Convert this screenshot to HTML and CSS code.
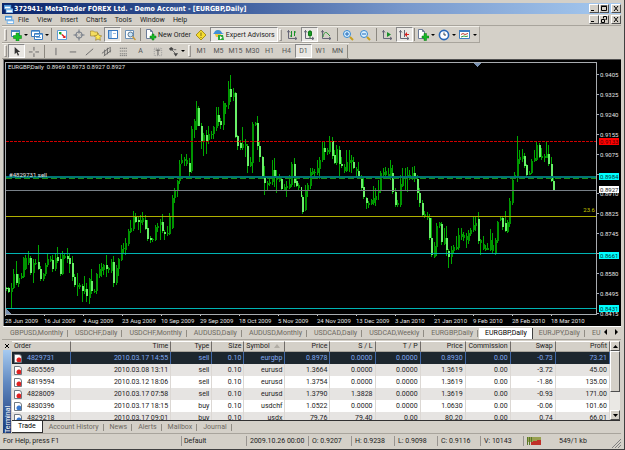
FILE: index.html
```html
<!DOCTYPE html>
<html lang="en">
<head>
<meta charset="utf-8">
<title>372941: MetaTrader FOREX Ltd. - Demo Account - [EURGBP,Daily]</title>
<link rel="stylesheet" href="styles.css">
</head>
<body>
<svg class="defs" aria-hidden="true">
  <symbol id="app" viewBox="0 0 10 10"><path fill="#4a94d8" d="M0 1h8v5H0z"/><path fill="#fff" d="M1 3h6v2H1z"/><path fill="#78b4e8" d="M2 5h8v5H2z"/><path fill="#fff" d="M3 7h6v2H3z"/></symbol>
  <symbol id="doc" viewBox="0 0 10 10"><path fill="#fff" stroke="#6c7c98" d="M1.500.5h4l2 2v7h-6z"/><path fill="none" stroke="#6c7c98" d="M5.500.5v2h2"/></symbol>
  <symbol id="axes" viewBox="0 0 10 10"><path fill="none" stroke="#667" d="M1.500 0v8.500H10M0 2.500l1.500-2 1.500 2M8 7l2 1.500L8 10"/></symbol>
</svg>
<div class="window">
  <header class="titlebar">
    <svg class="logo"><use href="#app"/></svg>
    <h1>372941: MetaTrader FOREX Ltd. - Demo Account - [EURGBP,Daily]</h1>
    <div class="winbtns">
      <button aria-label="Minimize"><svg viewBox="0 0 8 7"><path d="M1 5h3v1H1z"/></svg></button>
      <button aria-label="Maximize"><svg viewBox="0 0 8 7"><path fill="none" stroke="#000" d="M1.500 1.500h5v4h-5zM1 1h6"/></svg></button>
      <button class="close" aria-label="Close"><svg viewBox="0 0 8 7"><path stroke="#000" d="M2 1l4 5M6 1L2 6"/></svg></button>
    </div>
  </header>
  <nav class="menubar">
    <svg class="logo"><use href="#app"/></svg>
    <button>File</button><button>View</button><button>Insert</button><button>Charts</button><button>Tools</button><button>Window</button><button>Help</button>
    <div class="winbtns">
      <button aria-label="Minimize chart"><svg viewBox="0 0 8 7"><path d="M1 5h3v1H1z"/></svg></button>
      <button aria-label="Restore chart"><svg viewBox="0 0 8 7"><path fill="none" stroke="#000" d="M3.500 2.500v-2h3v3h-1M1.500 3.500h3v3h-3z"/></svg></button>
      <button class="close" aria-label="Close chart"><svg viewBox="0 0 8 7"><path stroke="#000" d="M2 1l4 5M6 1L2 6"/></svg></button>
    </div>
  </nav>

  <div class="toolbars">
    <div class="bar">
      <i class="grip"></i>
      <button class="drop" aria-label="New chart"><svg viewBox="0 0 12 12"><path fill="#fff" stroke="#4a84c0" d="M1.500 1.500h8v6h-8z"/><path fill="#4a84c0" d="M1 1h9v2H1z"/><path fill="#18c028" stroke="#087810" stroke-width=".5" d="M6 4h3v2.500h2.500v3H9V12H6V9.500H3.500v-3H6z"/></svg></button>
      <button class="drop" aria-label="Profiles"><svg viewBox="0 0 12 12"><path fill="#fff" stroke="#3c7cc0" d="M.5 1.500h8v6h-8zM3.500 4.500h8v6h-8z"/><path fill="#78b0e0" d="M4 5h7v1H4zM5 8h5v1H5zM1 2h7v1H1z"/></svg></button>
      <i class="sep"></i>
      <button aria-label="Market watch"><svg viewBox="0 0 12 12"><path fill="#fff" stroke="#5a9ad4" d="M1.500 1.500h9v9h-9z"/><path fill="#18a828" d="M3 5.500V3h3z"/><path stroke="#18a828" stroke-width="1.500" d="M3.500 3.500l2 2"/><path fill="#e02020" d="M9.500 6.500V9H6.500z"/><path stroke="#e02020" stroke-width="1.500" d="M6 5.500l3 3"/></svg></button>
      <button aria-label="Data window"><svg viewBox="0 0 12 12"><circle cx="6" cy="6" r="3.200" fill="none" stroke="#707884"/><path stroke="#707884" d="M6 .5v4M6 7.500v4M.5 6h4M7.500 6h4"/></svg></button>
      <button aria-label="Navigator"><svg viewBox="0 0 12 12"><path fill="#f4dc60" stroke="#a08838" stroke-width=".7" d="M.5 3.500V2h3l1 1h3v4h-7z"/><path fill="#ffe850" stroke="#988030" stroke-width=".7" d="M8 4l1.200 2.500 2.500.3-1.800 1.900.5 2.600L8 10l-2.400 1.300.5-2.600-1.800-1.900 2.500-.3z"/></svg></button>
      <button class="on" aria-label="Terminal"><svg viewBox="0 0 12 12"><path fill="#fff" stroke="#3878c0" d="M1.500 1.500h9v8h-9z"/><path fill="#3878c0" d="M1 1h10v1H1zM3 4h1v1H3zM3 6h1v1H3zM6 4h3v.6H6z"/><path fill="#9cc4ec" d="M2 2h3v7H2z"/></svg></button>
      <button aria-label="Strategy tester"><svg viewBox="0 0 12 12"><path fill="#fff" stroke="#6890b8" d="M1.500 1.500h8v8h-8z"/><circle cx="6.500" cy="5.500" r="2.500" fill="#c8e4f8" stroke="#607890"/><path stroke="#c89838" stroke-width="1.500" d="M8.500 7.500l3 3.500"/></svg></button>
      <i class="sep wide"></i>
      <button class="labelled"><svg viewBox="0 0 12 12"><use href="#doc" width="10" height="10"/><path fill="#18b828" stroke="#087810" stroke-width=".5" d="M7 5h2v2h2v2H9v2H7V9H5V7h2z"/></svg>New Order</button>
      <button aria-label="MetaEditor"><svg viewBox="0 0 12 12"><path fill="#f4dc30" stroke="#a89020" d="M6 1l5 5-5 5-5-5z"/><path fill="none" stroke="#806c10" d="M6 3.500v3.500M6 8v1"/></svg></button>
      <button class="labelled on"><svg viewBox="0 0 12 12"><circle cx="5" cy="4" r="3" fill="#f0c840"/><path fill="#4090d8" d="M1 4c1-4 7-4 8 0l2 1H0z"/><path fill="#f0c840" d="M2 5h6l-2 3H3z"/><path fill="#28a838" d="M5 6h5l1 5H5z"/><path fill="#fff" d="M7 7l2.500 1.700L7 10.500z"/></svg>Expert Advisors</button>
      <i class="grip"></i>
      <button aria-label="Bar chart"><svg viewBox="0 0 12 12"><use href="#axes" x="1" y="1" width="10" height="10"/><path fill="none" stroke="#189028" d="M5.500 2v6M4 7h1.500M8.500 2v5M8.500 3H10"/></svg></button>
      <button class="on" aria-label="Candlesticks"><svg viewBox="0 0 12 12"><use href="#axes" x="1" y="1" width="10" height="10"/><path fill="#20c030" stroke="#107818" d="M5.500 2.500h3v4h-3zM7 1v8"/></svg></button>
      <button aria-label="Line chart"><svg viewBox="0 0 12 12"><use href="#axes" x="1" y="1" width="10" height="10"/><path fill="none" stroke="#309838" d="M3 8c1-6 4-5 5-3l2 2"/></svg></button>
      <i class="sep wide"></i>
      <button aria-label="Zoom in"><svg viewBox="0 0 12 12"><path stroke="#c8a020" stroke-width="2" d="M8 8l3 3"/><circle cx="5" cy="5" r="3.500" fill="#d8f0ff" stroke="#3888d0"/><path stroke="#2068b8" d="M3 5h4M5 3v4"/></svg></button>
      <button aria-label="Zoom out"><svg viewBox="0 0 12 12"><path stroke="#c8a020" stroke-width="2" d="M8 8l3 3"/><circle cx="5" cy="5" r="3.500" fill="#d8f0ff" stroke="#3888d0"/><path stroke="#2068b8" d="M3 5h4"/></svg></button>
      <i class="sep wide"></i>
      <button aria-label="Auto scroll"><svg viewBox="0 0 12 12"><use href="#axes" x="1" y="1" width="10" height="10"/><path fill="#189028" d="M6 3l4 2.500L6 8z"/></svg></button>
      <button class="on" aria-label="Chart shift"><svg viewBox="0 0 12 12"><use href="#axes" x="1" y="1" width="10" height="10"/><path fill="none" stroke="#667" d="M6.500 1v7"/><path fill="#d82020" d="M11 5H9V3L6.500 5.500 9 8V6h2z"/></svg></button>
      <i class="sep"></i>
      <button class="drop" aria-label="Indicators"><svg viewBox="0 0 12 12"><use href="#doc" width="10" height="10"/><path fill="#18b828" stroke="#087810" stroke-width=".5" d="M7 4.500h2.500V7H12v2H9.500v2.500H7V9H5V7h2z"/></svg></button>
      <button class="drop" aria-label="Periods"><svg viewBox="0 0 12 12"><circle cx="6" cy="6" r="4.600" fill="#fff" stroke="#2868b8" stroke-width="1.600"/><path fill="none" stroke="#345" d="M6 3.500V6h2"/></svg></button>
      <button class="drop" aria-label="Templates"><svg viewBox="0 0 12 12"><path fill="#fff" stroke="#3c7cc0" d="M.5 1.500h10v8H.5z"/><path fill="#3c7cc0" d="M0 1h11v2H0z"/><path fill="none" stroke="#c04030" d="M2 5.500l2-1 2 1 3-1"/><path fill="none" stroke="#30a040" d="M2 8l3-1 2 .5 2-.5"/></svg></button>
    </div>
    <div class="bar fine">
      <i class="grip"></i>
      <button class="on" aria-label="Cursor"><svg viewBox="0 0 12 12"><path fill="#333" d="M4 1v8l2-2 1.500 3.500 1.300-.6L7.300 6.500H10z"/></svg></button>
      <button aria-label="Crosshair"><svg viewBox="0 0 12 12"><path stroke="#666" d="M6.500 1v4M6.500 8v4M1 6.500h4M8 6.500h4"/></svg></button>
      <i class="sep wide"></i>
      <button aria-label="Vertical line"><svg viewBox="0 0 12 12"><path stroke="#666" d="M6.500 2v8"/></svg></button>
      <button aria-label="Horizontal line"><svg viewBox="0 0 12 12"><path stroke="#666" d="M3 6.500h7"/></svg></button>
      <button aria-label="Trendline"><svg viewBox="0 0 12 12"><path stroke="#666" d="M2 10l8-7"/></svg></button>
      <button aria-label="Channel"><svg viewBox="0 0 12 12"><path stroke="#666" d="M1 8l8-6M3 11l8-6M4 4v6M7 2v7M10 1v6"/></svg></button>
      <button aria-label="Fibonacci"><svg viewBox="0 0 12 12"><path stroke="#777" stroke-dasharray="1.500 .6" d="M2 2.500h8M2 5.500h8M2 8.500h8M2 10.500h8"/></svg></button>
      <button>A</button>
      <button aria-label="Text label"><svg viewBox="0 0 12 12"><path fill="none" stroke="#999" stroke-dasharray="1 1" d="M2.500 2.500h8v8h-8z"/><path fill="none" stroke="#555" d="M4 4.500h5M6.500 4v6"/></svg></button>
      <button class="drop" aria-label="Arrows"><svg viewBox="0 0 12 12"><path fill="#444" d="M1 3l2.500-2L6 3 4.500 5h-2zM6 8h5l-2.500 3.500z"/><path stroke="#666" d="M4 4l5 5M6 4h3"/></svg></button>
      <i class="grip"></i>
      <button>M1</button><button>M5</button><button>M15</button><button>M30</button><button>H1</button><button>H4</button><button class="on">D1</button><button>W1</button><button>MN</button>
      <i class="sep"></i>
    </div>
  </div>

  <main class="chart">
    <div class="plot">
      <svg class="candles" viewBox="18 6 1773 759" preserveAspectRatio="none" role="img" aria-label="EURGBP daily candlesticks">
        <g id="bars"></g>
        <g class="levels">
          <path class="stop" d="M18 242H1791"/>
          <path class="entry" d="M18 351H1791"/>
          <path class="order" d="M18 355.500H1791"/>
          <path class="bid" d="M18 391.500H1791"/>
          <path class="fib" d="M18 469.500H1791"/>
          <path class="cyan" d="M18 583.500H1791M18 748.500H1791"/>
        </g>
        <path class="mark" d="M1422 6h24l-12 12zM18 747l18 18H18z"/>
      </svg>
      <span class="caption">EURGBP,Daily&nbsp; 0.8969 0.8973 0.8927 0.8927</span>
      <span class="trade">#4829731 sell</span>
      <span class="ratio">23.6</span>
    </div>
    <div class="prices">
      <ol><li>0.9405</li><li>0.9325</li><li>0.9240</li><li>0.9155</li><li>0.9075</li><li></li><li>0.8910</li><li>0.8825</li><li>0.8745</li><li></li><li>0.8580</li><li>0.8495</li><li>0.8415</li></ol>
      <b class="tag red">0.9133</b><b class="tag sell">0.8984</b><b class="tag now">0.8927</b><b class="tag low">0.8661</b><b class="tag base">0.8431</b>
    </div>
    <ol class="dates"><li>28 Jun 2009</li><li>16 Jul 2009</li><li>4 Aug 2009</li><li>23 Aug 2009</li><li>10 Sep 2009</li><li>29 Sep 2009</li><li>18 Oct 2009</li><li>5 Nov 2009</li><li>24 Nov 2009</li><li>13 Dec 2009</li><li>3 Jan 2010</li><li>21 Jan 2010</li><li>9 Feb 2010</li><li>28 Feb 2010</li><li>18 Mar 2010</li></ol>
  </main>

  <nav class="charttabs">
    <div class="strip"><button>GBPUSD,Monthly</button><button>USDCHF,Daily</button><button>USDCHF,Monthly</button><button>AUDUSD,Daily</button><button>AUDUSD,Monthly</button><button>USDCAD,Daily</button><button>USDCAD,Weekly</button><button>EURGBP,Daily</button><button class="active">EURGBP,Daily</button><button>EURJPY,Daily</button><button class="last">EU</button></div>
    <button class="nav" aria-label="Previous"><svg viewBox="0 0 4 6"><path d="M3 0v6L0 3z"/></svg></button>
    <button class="nav" aria-label="Next"><svg viewBox="0 0 4 6"><path d="M1 0v6l3-3z"/></svg></button>
  </nav>

  <section class="terminal">
    <aside><button aria-label="Close terminal"><svg viewBox="0 0 6 6"><path stroke="#000" d="M1 1l4 4M5 1L1 5"/></svg></button><div class="side"><span>Terminal</span></div></aside>
    <div class="panel">
      <div class="list">
        <div class="rows">
        <table>
          <colgroup><col class="c59"><col class="c100"><col class="c41"><col class="c32"><col class="c41"><col class="c45"><col class="c45"><col class="c45"><col class="c45"><col class="c45"><col class="c45"><col class="c54"></colgroup>
          <thead><tr><th class="l">Order</th><th>Time</th><th>Type</th><th>Size</th><th class="l">Symbol <span class="sort"></span></th><th>Price</th><th>S / L</th><th>T / P</th><th>Price</th><th>Commission</th><th>Swap</th><th>Profit</th></tr></thead>
          <tbody>
            <tr class="sel"><td class="l"><i class="dot"></i>4829731</td><td>2010.03.17 14:55</td><td>sell</td><td>0.10</td><td>eurgbp</td><td>0.8978</td><td>0.0000</td><td>0.0000</td><td>0.8930</td><td>0.00</td><td>-0.73</td><td>73.21</td></tr>
            <tr><td class="l"><i class="dot"></i>4805569</td><td>2010.03.08 13:11</td><td>sell</td><td>0.10</td><td>eurusd</td><td>1.3664</td><td>0.0000</td><td>0.0000</td><td>1.3619</td><td>0.00</td><td>-3.72</td><td>45.00</td></tr>
            <tr><td class="l"><i class="dot"></i>4819594</td><td>2010.03.12 18:06</td><td>sell</td><td>0.10</td><td>eurusd</td><td>1.3754</td><td>0.0000</td><td>0.0000</td><td>1.3619</td><td>0.00</td><td>-1.86</td><td>135.00</td></tr>
            <tr><td class="l"><i class="dot"></i>4828009</td><td>2010.03.17 07:58</td><td>sell</td><td>0.10</td><td>eurusd</td><td>1.3790</td><td>1.3828</td><td>0.0000</td><td>1.3619</td><td>0.00</td><td>-0.93</td><td>171.00</td></tr>
            <tr><td class="l"><i class="dot buy"></i>4830396</td><td>2010.03.17 18:15</td><td>buy</td><td>0.10</td><td>usdchf</td><td>1.0522</td><td>0.0000</td><td>0.0000</td><td>1.0630</td><td>0.00</td><td>-0.06</td><td>101.60</td></tr>
            <tr><td class="l"><i class="dot buy"></i>4829218</td><td>2010.03.17 09:01</td><td>buy</td><td>0.10</td><td>usdx</td><td>79.76</td><td>79.40</td><td>0.00</td><td>80.20</td><td>0.00</td><td>0.74</td><td>66.01</td></tr>
          </tbody>
        </table>
        </div>
        <div class="scroll"><button aria-label="Scroll up"><svg viewBox="0 0 5 3"><path d="M0 3h5L2.500 0z"/></svg></button><div class="thumb"></div><button aria-label="Scroll down"><svg viewBox="0 0 5 3"><path d="M0 0h5L2.500 3z"/></svg></button></div>
      </div>
      <nav class="tabs"><button class="active">Trade</button><button>Account History</button><button>News</button><button>Alerts</button><button>Mailbox</button><button>Journal</button></nav>
    </div>
  </section>

  <footer class="status">
    <span class="help">For Help, press F1</span><span class="profile">Default</span><span class="when">2009.10.26 00:00</span><span>O: 0.9207</span><span>H: 0.9238</span><span>L: 0.9098</span><span>C: 0.9116</span><span>V: 10143</span>
    <span class="net"><svg viewBox="0 0 15 8"><path fill="#98a050" d="M0 0h14v5H0z"/><path fill="#587828" d="M0 0h1v8H0zM2 0h1v8H2zM4 0h1v5H4z"/><path fill="#c03028" d="M4 5h2V4h4V3h4v5H4z"/></svg>549/1 kb</span>
    <svg class="resize" viewBox="0 0 10 10"><path stroke="#808080" d="M1 10l9-9M4 10l6-6M7 10l3-3"/></svg>
  </footer>
</div>
<script src="chart.js"></script>
</body>
</html>
```
FILE: chart.js
```js
// One entry per day: wick top, body top, body bottom, wick bottom; "d" marks a falling day.
const days = `684 686 690 694 d,682 687 697 703 d,670 685 697 748,630 645 686 690,605 645 670 678 d,645 655 675 682,640 650 656 660,592 596 652 656,586 596 628 632,575 596 612 618,
590 596 640 646 d,600 612 640 672,600 610 614 618,555 608 628 632 d,620 628 658 664 d,640 644 658 666,612 618 645 650,585 600 618 622,590 600 604 608,586 602 628 638 d,
583 596 628 636,562 594 604 610 d,584 600 644 650 d,575 588 644 648,585 590 596 600,565 590 598 612 d,585 596 615 640 d,590 612 652 665 d,645 652 678 684 d,640 676 682 710,
672 678 682 690,675 680 695 728 d,650 690 698 706,672 690 712 730 d,655 660 716 734,628 664 696 706 d,690 694 698 702,640 645 696 706,615 628 650 656,610 622 634 654,
615 618 632 648,588 618 628 654 d,622 626 632 640,600 608 634 640,590 608 672 684 d,616 625 672 676,596 600 628 650,556 568 602 606,550 564 568 584,535 550 570 588,
508 514 552 558,480 506 518 520,455 468 508 514,460 468 486 490 d,468 482 488 510 d,465 480 490 520,458 476 486 496,465 480 508 512 d,480 506 538 545 d,528 536 542 550 d,
534 538 542 548,496 502 540 544,490 500 506 518,478 488 496 540,462 486 514 520 d,512 516 524 540 d,500 520 524 528,460 470 522 526,405 414 506 508,385 392 414 430,
360 362 394 412,300 312 364 372,280 298 308 312,290 296 302 316,282 300 310 316,294 308 336 350 d,198 206 334 340,175 182 208 232,120 143 195 210,135 143 195 196 d,
188 195 242 265 d,218 225 244 286,210 225 242 282 d,195 220 240 250,212 220 225 236,195 200 222 236,140 162 204 212,140 162 184 198 d,172 182 194 206 d,122 126 194 208,
126 132 138 160,60 84 134 145,42 84 110 124 d,82 96 110 122,95 98 230 234 d,225 228 258 270 d,240 248 264 270 d,200 252 264 270,236 252 258 290,250 256 316 340 d,
290 306 316 320,183 190 308 338,184 188 194 198,165 188 256 268 d,245 256 290 305 d,286 290 350 356 d,318 350 370 404 d,362 368 374 392,358 365 373 378,300 330 366 376,
294 330 354 380 d,330 355 360 400,342 354 362 366,350 356 386 390 d,372 380 390 394,362 378 384 412,345 372 384 388,305 312 376 382,292 312 368 380 d,350 364 378 382 d,
370 376 384 390,352 380 412 416 d,405 412 456 462 d,375 390 452 455,370 374 390 412,325 336 378 386,322 334 342 345,328 336 340 348,298 324 340 346,290 298 328 358,
245 262 298 304,244 262 276 300 d,264 268 274 284,228 242 276 280,230 242 286 296 d,270 284 308 312 d,255 266 308 314,256 268 310 348 d,290 310 318 324 d,312 320 332 340,
270 306 332 336,270 300 308 336,285 300 306 340,290 304 322 326 d,320 326 334 350,305 332 350 356 d,346 350 384 390 d,350 382 412 416 d,410 414 430 446 d,424 428 434 445,
418 420 432 436,378 414 428 436,385 408 420 438,360 392 400 420,334 338 392 400,322 336 345 356,320 332 346 352,325 342 352 358,300 322 352 360,315 340 396 402 d,
385 396 436 440 d,420 430 436 440,345 372 436 442,322 348 378 380,322 348 354 392,320 346 354 395,330 345 356 360,320 340 356 360,318 338 356 366 d,345 358 398 420 d,
385 398 430 440 d,420 428 466 472 d,455 464 472 476,458 470 474 480,464 474 534 540 d,476 534 588 594 d,548 560 594 595,490 498 562 590,486 490 500 504,488 492 548 555 d,
505 536 552 556,500 536 572 590 d,568 574 592 626 d,560 570 594 614,555 562 574 580,530 562 568 572,505 525 566 570,505 522 532 540,516 526 536 544,520 530 540 565,
510 520 545 552,505 512 522 530,470 496 512 518,472 490 500 514,456 478 545 553 d,538 542 550 586,530 554 568 572,555 565 570 574,550 565 570 572,508 542 570 574,
520 555 575 580,535 540 582 586,485 488 545 550,472 475 480 484,470 476 502 510 d,455 490 514 518 d,480 488 516 520,415 424 494 502,358 360 430 434,335 346 352 356,
228 296 350 366,268 290 300 310,265 286 296 304,278 288 316 322 d,310 314 344 350 d,332 338 344 346,296 302 340 342,270 294 302 306,242 254 298 302,248 254 290 294 d,
262 288 294 298,280 286 292 304,245 280 292 294,255 282 312 316 d,290 312 362 366 d,355 362 390 393 d`;

const step = 7.31;
const unit = 3;
const group = document.getElementById("bars");

function rect(x, y, width, height, name) {
  const node = document.createElementNS("http://www.w3.org/2000/svg", "rect");
  Object.entries({ x, y, width, height, class: name }).forEach(([k, v]) => node.setAttribute(k, v));
  group.append(node);
}

days.split(",").forEach((day, i) => {
  const [high, top, bottom, low, fall] = day.trim().split(" ");
  const x = Math.round((18 + i * step) / unit) * unit;
  rect(x, +high, unit, low - high, "wick");
  rect(x, +top, unit * 2, Math.max(bottom - top, unit), fall ? "fall" : "rise");
});
```
FILE: styles.css
```css
* { box-sizing: border-box; }

body {
  margin: 0;
  background: #d4d0c8;
  color: #222;
  font: 7px/10px Roboto, "Liberation Sans", sans-serif;
}

button {
  margin: 0;
  padding: 0;
  border: 0;
  background: none;
  color: inherit;
  font: inherit;
  white-space: nowrap;
}

ol { margin: 0; padding: 0; list-style: none; }
.defs { position: absolute; width: 0; height: 0; }

.window {
  display: flex;
  flex-direction: column;
  height: 100vh;
  padding: 3px 3px 1px 2px;
  border-right: 1px solid #404040;
  border-bottom: 1px solid #404040;
  overflow: hidden;
}

/* Title and menu */
.titlebar, .menubar {
  display: flex;
  flex: none;
  align-items: center;
  height: 11px;
  padding-left: 2px;
}
.titlebar { background: linear-gradient(90deg, #0a246a, #3c5c9c 36%, #7898cc 65%, #a6caf0); color: #fff; }
.titlebar h1 { margin: 0; font: bold 7px/10px "DejaVu Sans Condensed", "DejaVu Sans", sans-serif; white-space: nowrap; }
.logo { flex: none; width: 9px; height: 9px; margin-right: 1px; }
.menubar { gap: 8px; padding-left: 3px; }
.menubar .logo { margin-right: -4px; }
.winbtns { display: flex; margin-left: auto; }
.winbtns button {
  width: 10px;
  height: 9px;
  border: 1px solid;
  border-color: #fff #505050 #505050 #fff;
  background: #d4d0c8;
}
.winbtns svg { display: block; width: 8px; height: 7px; }
.winbtns .close { margin-left: 2px; }

/* Toolbars */
.toolbars { flex: none; border-top: 1px solid #a8a49c; }
.bar {
  display: flex;
  align-items: center;
  width: max-content;
  height: 17px;
  padding-left: 1px;
  border-top: 1px solid #f0eee8;
  border-right: 1px solid #a8a49c;
  border-bottom: 1px solid #a8a49c;
}
.bar.fine { height: 16px; border-right: 0; color: #555; }
.grip { flex: none; width: 3px; height: 12px; margin: 0 2px 0 1px; border: 1px solid; border-color: #f4f2ee #989490 #989490 #f4f2ee; }
.bar .grip:first-child { margin-right: 1px; }
.sep { flex: none; width: 1px; height: 13px; margin: 0 1px; background: #8c8880; }
.sep.wide { margin: 0 2px; }
.bar button {
  display: flex;
  align-items: center;
  justify-content: center;
  width: 17px;
  height: 15px;
}
.bar.fine button { height: 14px; }
.bar svg { flex: none; width: 12px; height: 12px; }
.bar.fine svg { width: 11px; height: 11px; }
.bar .drop { width: 21px; gap: 2px; }
.drop::after { content: ""; border: 2px solid transparent; border-top-color: #000; border-bottom: 0; }
.bar .labelled { width: auto; gap: 1px; padding: 0 2px; color: #222; }
.bar .on { border: 1px solid; border-color: #888 #fff #fff #888; background: #e9e7e3; }

/* Chart */
.chart {
  display: grid;
  flex: 1;
  grid-template-columns: 1fr 24px;
  grid-template-rows: 1fr 11px;
  min-height: 0;
  margin-left: 1px;
  padding: 2px 0 0 1px;
  border-top: 1px solid #505050;
  border-left: 1px solid #808080;
  background: #000;
  color: #e4e4e4;
  font-size: 6px;
  line-height: 8px;
}
.plot { position: relative; min-height: 0; border: 1px solid #a8acb0; }
.candles { display: block; position: absolute; width: 100%; height: 100%; shape-rendering: crispEdges; }
.wick { fill: #00a800; }
.rise { fill: #009400; }
.fall { fill: #68f068; }
.levels path { fill: none; stroke-width: 1px; vector-effect: non-scaling-stroke; }
.levels .stop { stroke: #d00000; stroke-dasharray: 3 1; }
.levels .entry { stroke: #007474; stroke-width: 2px; }
.levels .order { stroke: #189018; stroke-dasharray: 6 3; }
.levels .bid { stroke: #788088; }
.levels .fib { stroke: #b0b000; }
.levels .cyan { stroke: #00b4b4; }
.mark { fill: #7890b0; }
.caption, .trade, .ratio { position: absolute; white-space: nowrap; }
.caption { top: 0; left: 2px; }
.trade { top: 43%; left: 3px; }
.ratio { top: 57%; right: 1px; color: #c8c800; }
.prices { position: relative; }
.prices ol {
  display: flex;
  flex-direction: column;
  justify-content: space-between;
  height: calc(100% + 3px);
  padding-top: 9px;
}
.prices li { height: 8px; }
.prices li::before { content: ""; display: inline-block; width: 2px; height: 1px; margin-right: 1px; background: #a8acb0; vertical-align: 2px; }
.tag { position: absolute; left: 2px; width: 20px; height: 7px; padding-left: 1px; background: #0ff; color: #003838; font-weight: 400; line-height: 7px; }
.tag.red { top: 30%; background: #f00; color: #500000; }
.tag.sell { top: 44%; }
.tag.now { top: 49%; background: #fff; color: #222; }
.tag.low { top: 75%; }
.tag.base { top: 96%; }
.dates { display: grid; grid-column: 1 / -1; grid-template-columns: repeat(15, 39px); justify-content: start; white-space: nowrap; line-height: 9px; }
.dates li::before { content: ""; display: block; width: 1px; height: 1px; background: #c0c0c0; }

/* Chart tabs */
.charttabs { display: flex; flex: none; align-items: center; height: 13px; margin-left: 1px; padding-left: 1px; border-top: 1px solid #fff; color: #6c6860; }
.strip { display: flex; flex: 1; min-width: 0; overflow: hidden; }
.strip button { flex: none; padding: 0 5px 0 6px; border-right: 1px solid transparent; line-height: 11px; background: linear-gradient(#908c84, #908c84) right center / 1px 7px no-repeat; }
.strip .active { background: #fff; color: #000; border-right-color: #404040; }
.strip .last { padding-right: 0; background: none; }
.nav { width: 10px; height: 10px; }
.nav svg { width: 4px; height: 6px; }

/* Terminal */
.terminal { display: flex; flex: none; height: 94px; border-top: 1px solid #a8a49c; }
aside { display: flex; flex: none; flex-direction: column; width: 9px; padding-left: 1px; }
aside button { height: 10px; }
aside button svg { display: block; width: 6px; height: 6px; margin: 2px auto 0; }
.side { flex: 1; background: linear-gradient(0deg, #a6caf0, #6088c0 40%, #183878); color: #fff; writing-mode: vertical-rl; transform: rotate(180deg); }
.side span { line-height: 8px; }
.panel { display: flex; flex: 1; flex-direction: column; min-width: 0; }
.list { display: flex; height: 80px; margin: 1px 1px 0; border-bottom: 1px solid #303030; }
.rows { flex: 1; min-width: 0; overflow: hidden; background: #fff; }
table { width: 100%; table-layout: fixed; border-collapse: separate; border-spacing: 0; }
.c59 { width: 59px; } .c100 { width: 100px; } .c41 { width: 41px; } .c32 { width: 32px; } .c45 { width: 45px; } .c54 { width: 54px; }
th, td { padding: 0 2px; text-align: right; white-space: nowrap; }
th { height: 11px; border-right: 1px solid #706c68; border-bottom: 1px solid #a8a49c; border-top: 1px solid #fff; background: #d4d0c8; font-weight: 400; line-height: 9px; }
td { height: 12px; border-right: 1px solid #dcd8d4; line-height: 12px; }
th.l, td.l { text-align: left; }
tbody tr:nth-child(even) { background: #e6e4e2; }
tbody .sel { background: #1c262e; color: #80a8f0; }
.sel td { border-right-color: #4068a8; }
.sort { display: inline-block; margin-left: 3px; border: 3px solid transparent; border-top: 0; border-bottom: 4px solid #b0aca4; }
.dot { display: inline-block; width: 8px; height: 9px; margin-right: 5px; border: 1px solid #707880; border-radius: 0 3px 0 0; background: radial-gradient(circle at 5px 6px, #e02020 2px, #fff 3px) border-box; vertical-align: middle; }
.dot.buy { background-image: radial-gradient(circle at 5px 6px, #3878d0 2px, #fff 3px); }
.scroll { display: flex; flex: none; flex-direction: column; width: 10px; background: #eae8e4; }
.scroll button, .thumb { border: 1px solid; border-color: #fff #505050 #505050 #fff; background: #d4d0c8; }
.scroll button { height: 10px; }
.scroll button svg { display: block; width: 5px; height: 3px; margin: 0 auto; }
.thumb { height: 41px; margin-bottom: auto; }
.tabs { display: flex; padding-left: 1px; color: #6c6860; }
.tabs button { padding: 0 5px 0 6px; line-height: 11px; background: linear-gradient(#908c84, #908c84) right center / 1px 7px no-repeat; }
.tabs .active { padding-right: 6px; border-right: 1px solid #303030; border-bottom: 1px solid #303030; background: #fff; color: #000; }

/* Status bar */
.status { display: flex; flex: none; align-items: center; height: 15px; border-top: 1px solid #a8a49c; white-space: nowrap; }
.status > span { width: 43px; padding-left: 3px; border-left: 1px solid #989490; }
.status .help { flex: 1; padding-left: 1px; border-left: 0; }
.status .profile { width: 65px; padding-left: 2px; }
.status .when { width: 62px; }
.status .net { display: flex; gap: 17px; align-items: center; width: 88px; }
.net svg { width: 15px; height: 8px; }
.resize { align-self: flex-end; width: 10px; height: 10px; }
```
